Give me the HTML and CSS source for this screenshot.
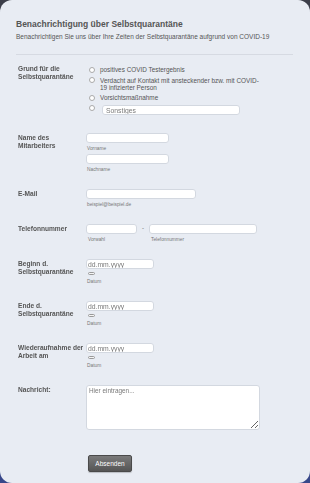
FILE: index.html
```html
<!DOCTYPE html>
<html lang="de">
<head>
    <meta charset="UTF-8">
    <meta name="viewport" content="width=device-width, initial-scale=1.0">
    <title>Benachrichtigung über Selbstquarantäne</title>
    <link rel="stylesheet" href="styles.css">
</head>
<body>
    <div class="form-card">
        <div class="form-header">
            <h2>Benachrichtigung über Selbstquarantäne</h2>
            <p>Benachrichtigen Sie uns über Ihre Zeiten der Selbstquarantäne aufgrund von COVID-19</p>
        </div>

        <form class="form-body" onsubmit="return false">
            <div class="form-line first-line">
                <div class="form-label">Grund für die Selbstquarantäne</div>
                <div class="form-input radio-list">
                    <div class="radio-item"><span class="radio"></span><span>positives COVID Testergebnis</span></div>
                    <div class="radio-item"><span class="radio"></span><span>Verdacht auf Kontakt mit ansteckender bzw. mit COVID-19 infizierter Person</span></div>
                    <div class="radio-item"><span class="radio"></span><span>Vorsichtsmaßnahme</span></div>
                    <div class="radio-item other"><span class="radio"></span><input class="text-field other-field" type="text" placeholder="Sonstiges"></div>
                </div>
            </div>

            <div class="form-line">
                <div class="form-label">Name des Mitarbeiters</div>
                <div class="form-input">
                    <input class="text-field name-field" type="text">
                    <span class="sublabel">Vorname</span>
                    <input class="text-field name-field" type="text">
                    <span class="sublabel">Nachname</span>
                </div>
            </div>

            <div class="form-line">
                <div class="form-label">E-Mail</div>
                <div class="form-input">
                    <input class="text-field mail-field" type="text">
                    <span class="sublabel">beispiel@beispiel.de</span>
                </div>
            </div>

            <div class="form-line">
                <div class="form-label">Telefonnummer</div>
                <div class="form-input phone-row">
                    <div class="phone-part">
                        <input class="text-field area-field" type="text">
                        <span class="sublabel">Vorwahl</span>
                    </div>
                    <span class="phone-dash">-</span>
                    <div class="phone-part">
                        <input class="text-field number-field" type="text">
                        <span class="sublabel">Telefonnummer</span>
                    </div>
                </div>
            </div>

            <div class="form-line">
                <div class="form-label">Beginn d. Selbstquarantäne</div>
                <div class="form-input">
                    <input class="text-field date-field" type="text" placeholder="dd.mm.yyyy">
                    <span class="date-button"></span>
                    <span class="sublabel">Datum</span>
                </div>
            </div>

            <div class="form-line">
                <div class="form-label">Ende d. Selbstquarantäne</div>
                <div class="form-input">
                    <input class="text-field date-field" type="text" placeholder="dd.mm.yyyy">
                    <span class="date-button"></span>
                    <span class="sublabel">Datum</span>
                </div>
            </div>

            <div class="form-line">
                <div class="form-label">Wiederaufnahme der Arbeit am</div>
                <div class="form-input">
                    <input class="text-field date-field" type="text" placeholder="dd.mm.yyyy">
                    <span class="date-button"></span>
                    <span class="sublabel">Datum</span>
                </div>
            </div>

            <div class="form-line">
                <div class="form-label">Nachricht:</div>
                <div class="form-input">
                    <textarea class="text-field message-field" placeholder="Hier eintragen..."></textarea>
                </div>
            </div>

            <div class="form-buttons">
                <button class="submit-button" type="submit">Absenden</button>
            </div>
        </form>
    </div>
</body>
</html>
```

FILE: styles.css
```css
html, body {
    height: 100%;
}

body {
    margin: 0;
    font-family: "Liberation Sans", Arial, sans-serif;
    background: linear-gradient(to bottom, #3c3e49, #37478a);
    overflow: hidden;
}

.form-card {
    box-sizing: border-box;
    width: 310px;
    height: 483px;
    background-color: #e8ecf3;
    border-radius: 12px;
    padding: 19px 16px 0 16px;
}

/* Header */
.form-header {
    border-bottom: 1px solid #d6dae2;
    padding-bottom: 13px;
    margin-right: 1px;
}

.form-header h2 {
    margin: 0;
    font-size: 8.5px;
    line-height: 10px;
    color: #555;
}

.form-header p {
    margin: 4px 0 0 0;
    font-size: 6.5px;
    line-height: 8px;
    color: #555;
}

/* Rows */
.form-body {
    padding-top: 10px;
}

.form-line {
    display: grid;
    grid-template-columns: 70px 175px;
    margin-bottom: 17px;
}

.first-line {
    margin-bottom: 18px;
}

.form-label {
    padding-left: 2px;
    padding-top: 1px;
    font-size: 6.6px;
    line-height: 8px;
    font-weight: bold;
    color: #555;
    will-change: transform;
}

.first-line .form-label {
    padding-top: 0;
}

.form-input {
    display: flex;
    flex-direction: column;
    align-items: flex-start;
}

.sublabel {
    font-size: 4.8px;
    line-height: 5px;
    color: #777;
    margin: 3px 0 0 1px;
}

.text-field {
    box-sizing: border-box;
    height: 10px;
    margin: 0;
    padding: 0 1px;
    background: #fff;
    border: 1px solid #d3d8e0;
    border-radius: 3px;
    font-family: "Liberation Sans", Arial, sans-serif;
    font-size: 6.8px;
    color: #555;
    outline: none;
    will-change: transform;
}

.text-field::placeholder {
    color: #7a7a7a;
}

.sublabel + .text-field {
    margin-top: 3px;
}

.name-field {
    width: 83px;
}

.mail-field {
    width: 110px;
}

/* Radio buttons */
.radio-list {
    gap: 3.5px;
    padding-top: 1px;
}

.radio-item {
    display: flex;
    align-items: flex-start;
    gap: 5px;
    font-size: 6.4px;
    line-height: 7px;
    color: #555;
}

.radio {
    flex-shrink: 0;
    box-sizing: border-box;
    width: 6px;
    height: 6px;
    margin: 0.5px 0 0 3px;
    background: #fff;
    border: 1px solid #aaa;
    border-radius: 50%;
}

.radio-item.other {
    gap: 7px;
}

.other-field {
    width: 138px;
    padding-left: 3px;
}

/* Phone */
.phone-row {
    flex-direction: row;
}

.phone-part {
    display: flex;
    flex-direction: column;
}

.phone-part .sublabel {
    margin-left: 2px;
}

.area-field {
    width: 51px;
}

.phone-dash {
    width: 12px;
    text-align: center;
    font-size: 6px;
    line-height: 8px;
    color: #555;
}

.number-field {
    width: 108px;
}

/* Dates */
.date-field {
    width: 68px;
}

.date-button {
    box-sizing: border-box;
    width: 7px;
    height: 3px;
    margin: 3px 0 0 2px;
    border: 1px solid #999;
    border-radius: 2px;
    background: #f4f4f4;
}

.date-button + .sublabel {
    margin-top: 4px;
}

.message-field {
    width: 174px;
    height: 45px;
    padding: 1px 2px;
    font-size: 6.4px;
    resize: vertical;
}

/* Submit */
.form-buttons {
    padding-left: 72px;
    margin-top: 22px;
}

.submit-button {
    width: 44px;
    height: 17px;
    padding: 0;
    font-family: "Liberation Sans", Arial, sans-serif;
    font-size: 6.5px;
    color: #fff;
    background: linear-gradient(to bottom, #7a7a7a, #555);
    border: 1px solid #4a4a4a;
    border-radius: 2px;
    box-shadow: 0 1px 1px rgba(0,0,0,0.2);
    cursor: pointer;
}
```
